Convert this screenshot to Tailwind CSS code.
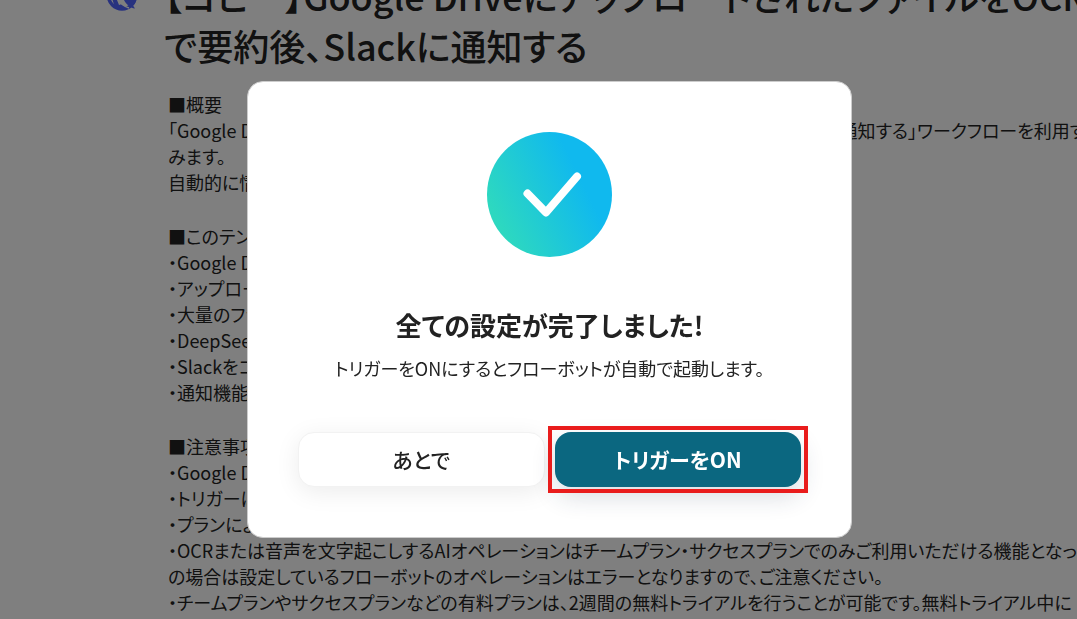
<!DOCTYPE html>
<html lang="ja">
<head>
    <meta charset="UTF-8">
    <meta name="viewport" content="width=device-width, initial-scale=1.0">
    <title>フローボット</title>
    <script src="https://cdn.jsdelivr.net/npm/@tailwindcss/browser@4"></script>
</head>
<body class="h-screen overflow-hidden bg-white text-[#222] font-['Noto_Sans_CJK_JP',sans-serif] [font-feature-settings:'palt']">
    <!-- flow bot page, scrolled under the dialog -->
    <main class="-mt-[30px] pl-[107px] flex gap-[26px] whitespace-nowrap">
        <svg class="mt-2.5 size-[31px] shrink-0" viewBox="0 0 31 31" fill="none">
            <circle cx="15" cy="15.500" r="13.500" stroke="#5064ff" stroke-width="3.500"/>
            <path d="M14 15l3 5c2 4 6 8 11 8.500l-2-3c2-1 3-4 3-7z" fill="#5064ff"/>
            <path d="M5 18l5 2 2 5 3-1 5 4-5 2-7-2z" fill="#5064ff"/>
            <path d="M11 18c1 4 5 8 11 10" stroke="#fff" stroke-width="1.500"/>
        </svg>
        <div>
            <h1 class="text-[36px] leading-[50px] font-medium">【コピー】Google DriveにアップロードされたファイルをOCR<br>で要約後、Slackに通知する</h1>
            <div class="mt-[21px] pl-1 flex flex-col gap-7 text-[18px] leading-[26px]">
                <p>■概要<br>「Google DriveにアップロードされたファイルをOCRし、DeepSeek V3で要約後、Slackに通知する」ワークフローを利用すると<br>みます。<br>自動的に情報が共有されます。</p>
                <p>■このテンプレートをおすすめする方<br>・Google Driveを利用している方<br>・アップロードしたファイルを要約したい方<br>・大量のファイルを扱う方<br>・DeepSeekを活用したい方<br>・Slackをコミュニケーションに使う方<br>・通知機能を活用したい方</p>
                <p>■注意事項<br>・Google Drive、DeepSeek、Slackを連携してください。<br>・トリガーは5分間隔で起動します。<br>・プランによって最短の起動間隔が異なります。<br>・OCRまたは音声を文字起こしするAIオペレーションはチームプラン・サクセスプランでのみご利用いただける機能となっ<br>の場合は設定しているフローボットのオペレーションはエラーとなりますので、ご注意ください。<br>・チームプランやサクセスプランなどの有料プランは、2週間の無料トライアルを行うことが可能です。無料トライアル中に</p>
            </div>
        </div>
    </main>

    <div class="fixed inset-0 flex items-center justify-center bg-black/50 pl-[22px]">
        <div role="dialog" aria-labelledby="done" class="w-full max-w-[605px] rounded-2xl border border-[#ccc] bg-white px-[50px] py-[50px] text-center">
            <svg class="mx-auto size-[125px]" viewBox="0 0 125 125" fill="none">
                <defs>
                    <linearGradient id="grad" x1="10" y1="88" x2="94" y2="47" gradientUnits="userSpaceOnUse">
                        <stop stop-color="#2dd8c0"/>
                        <stop offset="1" stop-color="#10b9ee"/>
                    </linearGradient>
                </defs>
                <circle cx="62.500" cy="62.500" r="62.500" fill="url(#grad)"/>
                <path d="M40.500 61.500L59 80.500L90 44.500" stroke="#fff" stroke-width="8" stroke-linecap="round" stroke-linejoin="round"/>
            </svg>
            <h2 id="done" class="mt-[50px] text-[26px] leading-9 font-bold">全ての設定が完了しました!</h2>
            <p class="mt-3 text-[18px] leading-[26px]">トリガーをONにするとフローボットが自動で起動します。</p>
            <div class="mt-[51px] grid grid-cols-2 gap-2.5">
                <button class="h-[55px] rounded-2xl border border-[#f2f2f2] bg-white text-[21px] font-medium shadow-[0_5px_25px_rgba(0,0,0,0.08)]">あとで</button>
                <div class="relative">
                    <button class="h-[55px] w-full rounded-2xl bg-[#0b6780] text-[21px] font-bold text-white shadow-[0_10px_25px_rgba(30,50,80,0.16)]">トリガーをON</button>
                    <span class="pointer-events-none absolute -inset-x-[7px] -inset-y-1.5 border-4 border-[#e91c1c]"></span>
                </div>
            </div>
        </div>
    </div>
</body>
</html>
